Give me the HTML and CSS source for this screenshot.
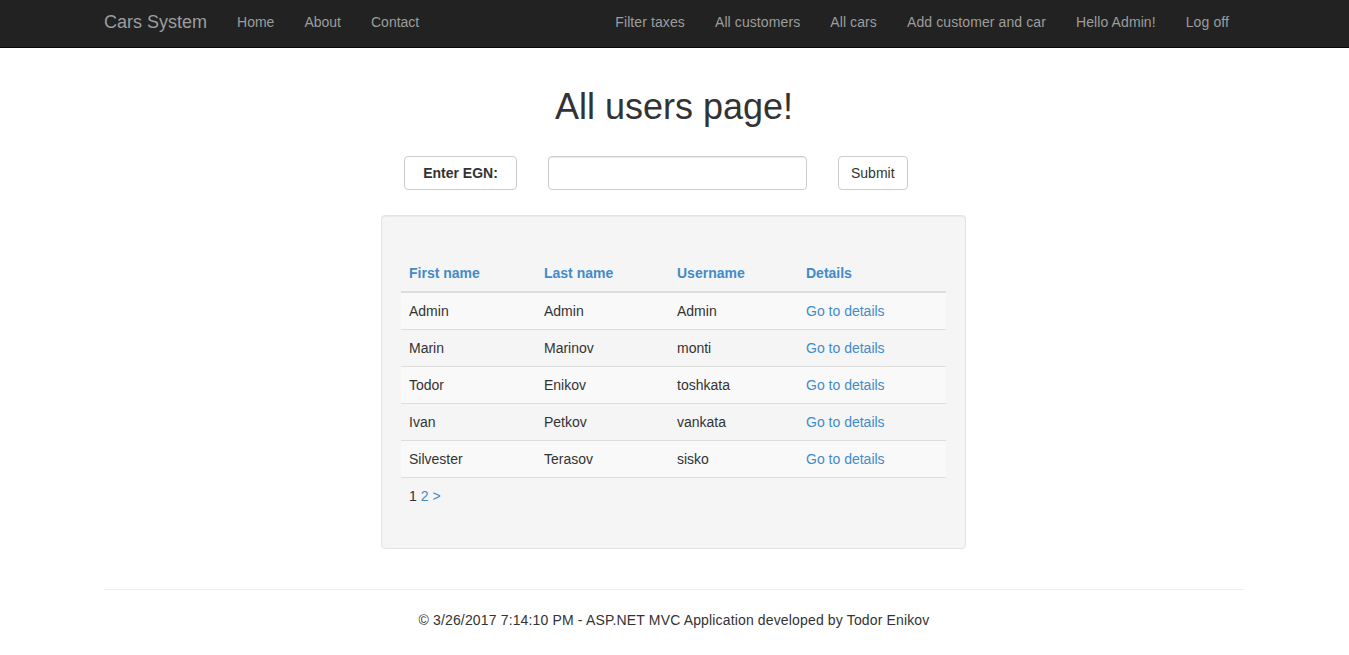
FILE: index.html
```html
<!DOCTYPE html>
<html lang="en">
<head>
<meta charset="utf-8">
<title>All users page</title>
<link rel="stylesheet" href="styles.css">
</head>
<body>
<nav class="navbar">
  <div class="container nav-inner">
    <a class="brand" href="#">Cars System</a>
    <ul class="nav">
      <li><a href="#">Home</a></li>
      <li><a href="#">About</a></li>
      <li><a href="#">Contact</a></li>
    </ul>
    <ul class="nav nav-right">
      <li><a href="#">Filter taxes</a></li>
      <li><a href="#">All customers</a></li>
      <li><a href="#">All cars</a></li>
      <li><a href="#">Add customer and car</a></li>
      <li><a href="#">Hello Admin!</a></li>
      <li><a href="#">Log off</a></li>
    </ul>
  </div>
</nav>

<main class="container body-content">
  <h1 class="title">All users page!</h1>

  <form class="search-row">
    <label class="egn-label" for="egn">Enter EGN:</label>
    <input class="egn-input" id="egn" type="text">
    <button class="btn" type="button">Submit</button>
  </form>

  <div class="well">
    <table class="table">
      <thead>
        <tr>
          <th class="c1"><a href="#">First name</a></th>
          <th class="c2"><a href="#">Last name</a></th>
          <th class="c3"><a href="#">Username</a></th>
          <th class="c4"><a href="#">Details</a></th>
        </tr>
      </thead>
      <tbody>
        <tr class="odd"><td>Admin</td><td>Admin</td><td>Admin</td><td><a href="#">Go to details</a></td></tr>
        <tr><td>Marin</td><td>Marinov</td><td>monti</td><td><a href="#">Go to details</a></td></tr>
        <tr class="odd"><td>Todor</td><td>Enikov</td><td>toshkata</td><td><a href="#">Go to details</a></td></tr>
        <tr><td>Ivan</td><td>Petkov</td><td>vankata</td><td><a href="#">Go to details</a></td></tr>
        <tr class="odd"><td>Silvester</td><td>Terasov</td><td>sisko</td><td><a href="#">Go to details</a></td></tr>
        <tr><td colspan="4" class="pager"><span>1</span> <a href="#">2</a> <a href="#">&gt;</a></td></tr>
      </tbody>
    </table>
  </div>

  <hr class="rule">
  <footer class="footer">
    <p>&copy; 3/26/2017 7:14:10 PM - ASP.NET MVC Application developed by Todor Enikov</p>
  </footer>
</main>
</body>
</html>
```

FILE: styles.css
```css
* { box-sizing: border-box; }

html, body {
  margin: 0;
  padding: 0;
}

body {
  font-family: "Liberation Sans", Arial, Helvetica, sans-serif;
  font-size: 14px;
  line-height: 20px;
  color: #333333;
  background: #ffffff;
}

a {
  color: #428bca;
  text-decoration: none;
}

.container {
  width: 1170px;
  margin: 0 0 0 89px;
  padding: 0 15px;
}

/* navbar */
.navbar {
  background: #222222;
  border-bottom: 1px solid #080808;
  height: 48px;
}

.nav-inner {
  display: flex;
  align-items: flex-start;
}

.brand {
  display: block;
  color: #9d9d9d;
  font-size: 18px;
  line-height: 20px;
  padding: 12px 15px;
  margin-left: -15px;
}

.nav {
  display: flex;
  list-style: none;
  margin: 0;
  padding: 0;
}

.nav a {
  display: block;
  color: #9d9d9d;
  padding: 12px 15px;
  line-height: 20px;
}

.nav-right {
  margin-left: auto;
  margin-right: 0;
}

.nav-right a {
  letter-spacing: 0.1px;
}

/* content */
.body-content {
  padding-top: 39px;
}

.title {
  margin: 0;
  font-size: 36px;
  line-height: 1.1;
  font-weight: 500;
  text-align: center;
  color: #333333;
}

.search-row {
  display: flex;
  align-items: center;
  gap: 31px;
  margin: 29px 0 0 300px;
  height: 34px;
}

.egn-label {
  display: flex;
  align-items: center;
  justify-content: center;
  width: 113px;
  height: 34px;
  border: 1px solid #cccccc;
  border-radius: 4px;
  font-weight: bold;
  color: #333333;
}

.egn-input {
  width: 259px;
  height: 34px;
  border: 1px solid #cccccc;
  border-radius: 4px;
  padding: 6px 12px;
  font: inherit;
  box-shadow: inset 0 1px 1px rgba(0, 0, 0, 0.075);
}

.btn {
  height: 34px;
  padding: 6px 12px;
  border: 1px solid #cccccc;
  border-radius: 4px;
  background: #ffffff;
  color: #333333;
  font: inherit;
}

.well {
  width: 585px;
  margin: 25px 0 0 277px;
  padding: 19px;
  background: #f5f5f5;
  border: 1px solid #e3e3e3;
  border-radius: 4px;
  box-shadow: inset 0 1px 1px rgba(0, 0, 0, 0.05);
}

.table {
  width: 100%;
  border-collapse: collapse;
  border-spacing: 0;
  margin: 20px 0 15px;
}

.table th,
.table td {
  padding: 8px;
  text-align: left;
  vertical-align: top;
  line-height: 20px;
}

.table th {
  font-weight: bold;
  border-bottom: 2px solid #dddddd;
}

.table td {
  border-top: 1px solid #dddddd;
}

.table tbody tr.odd td {
  background: #f9f9f9;
}

.c1 { width: 135px; }
.c2 { width: 133px; }
.c3 { width: 129px; }

.pager span { color: #333333; }

.rule {
  border: 0;
  border-top: 1px solid #eeeeee;
  margin: 40px 0 20px;
}

.footer {
  text-align: center;
}

.footer p {
  margin: 0 0 10px;
  letter-spacing: 0.15px;
}
```
